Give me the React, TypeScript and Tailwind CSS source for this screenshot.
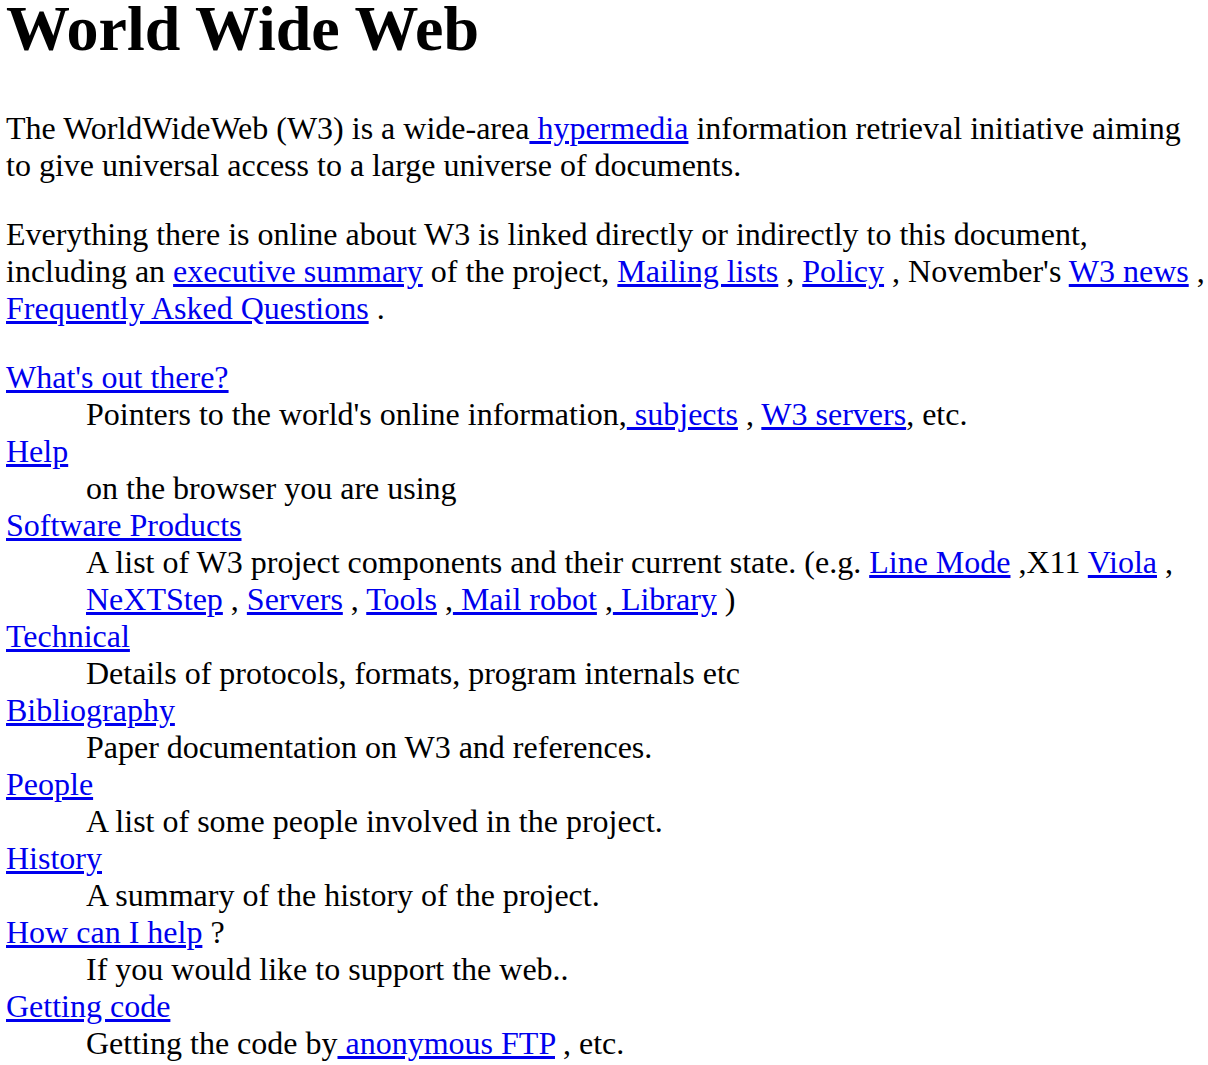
import type { ReactNode } from "react";

// Plain hypertext link in the old browser blue
function Link({ href, children }: { href: string; children: ReactNode }) {
  return (
    <a href={href} className="text-[#0000ee] underline">
      {children}
    </a>
  );
}

type Entry = {
  term: string;
  href: string;
  after?: string;
  desc: ReactNode;
};

const entries: Entry[] = [
  {
    term: "What's out there?",
    href: "../DataSources/Top.html",
    desc: (
      <>
        Pointers to the world's online information,
        <Link href="../DataSources/bySubject/Overview.html"> subjects</Link>
        {" , "}
        <Link href="../DataSources/WWW/Servers.html">W3 servers</Link>, etc.
      </>
    ),
  },
  {
    term: "Help",
    href: "Help.html",
    desc: "on the browser you are using",
  },
  {
    term: "Software Products",
    href: "Status.html",
    desc: (
      <>
        A list of W3 project components and their current state. (e.g.{" "}
        <Link href="LineMode/Browser.html">Line Mode</Link> ,X11{" "}
        <Link href="Status.html#35">Viola</Link> ,{" "}
        <Link href="NeXT/WorldWideWeb.html">NeXTStep</Link> ,{" "}
        <Link href="Daemon/Overview.html">Servers</Link> ,{" "}
        <Link href="Tools/Overview.html">Tools</Link> ,
        <Link href="MailRobot/Overview.html"> Mail robot</Link> ,
        <Link href="Status.html#57"> Library</Link> )
      </>
    ),
  },
  {
    term: "Technical",
    href: "Technical.html",
    desc: "Details of protocols, formats, program internals etc",
  },
  {
    term: "Bibliography",
    href: "Bibliography.html",
    desc: "Paper documentation on W3 and references.",
  },
  {
    term: "People",
    href: "People.html",
    desc: "A list of some people involved in the project.",
  },
  {
    term: "History",
    href: "History.html",
    desc: "A summary of the history of the project.",
  },
  {
    term: "How can I help",
    href: "Helping.html",
    after: " ?",
    desc: "If you would like to support the web..",
  },
  {
    term: "Getting code",
    href: "../README.html",
    desc: (
      <>
        Getting the code by
        <Link href="LineMode/Defaults/Distribution.html"> anonymous FTP</Link> , etc.
      </>
    ),
  },
];

export default function App() {
  return (
    <div className="min-h-screen bg-white pl-[6px] font-['Liberation_Serif','Times_New_Roman',serif] text-[32px] leading-[normal] text-black">
      <h1 className="mb-[52px] text-[64px] font-bold leading-[58px]">World Wide Web</h1>

      <p>
        The WorldWideWeb (W3) is a wide-area
        <Link href="WhatIs.html"> hypermedia</Link> information retrieval initiative
        aiming to give universal access to a large universe of documents.
      </p>

      <p className="mt-[32px]">
        Everything there is online about W3 is linked directly or indirectly to this
        document, including an <Link href="Summary.html">executive summary</Link> of the
        project, <Link href="Administration/Mailing/Overview.html">Mailing lists</Link> ,{" "}
        <Link href="Policy.html">Policy</Link> , November's{" "}
        <span className="whitespace-nowrap">
          <Link href="News/9211.html">W3 news</Link> ,
        </span>{" "}
        <Link href="FAQ/List.html">Frequently Asked Questions</Link> .
      </p>

      <dl className="my-[32px]">
        {entries.map((e) => (
          <div key={e.term}>
            <dt>
              <Link href={e.href}>{e.term}</Link>
              {e.after}
            </dt>
            <dd className="ml-[80px]">{e.desc}</dd>
          </div>
        ))}
      </dl>
    </div>
  );
}
